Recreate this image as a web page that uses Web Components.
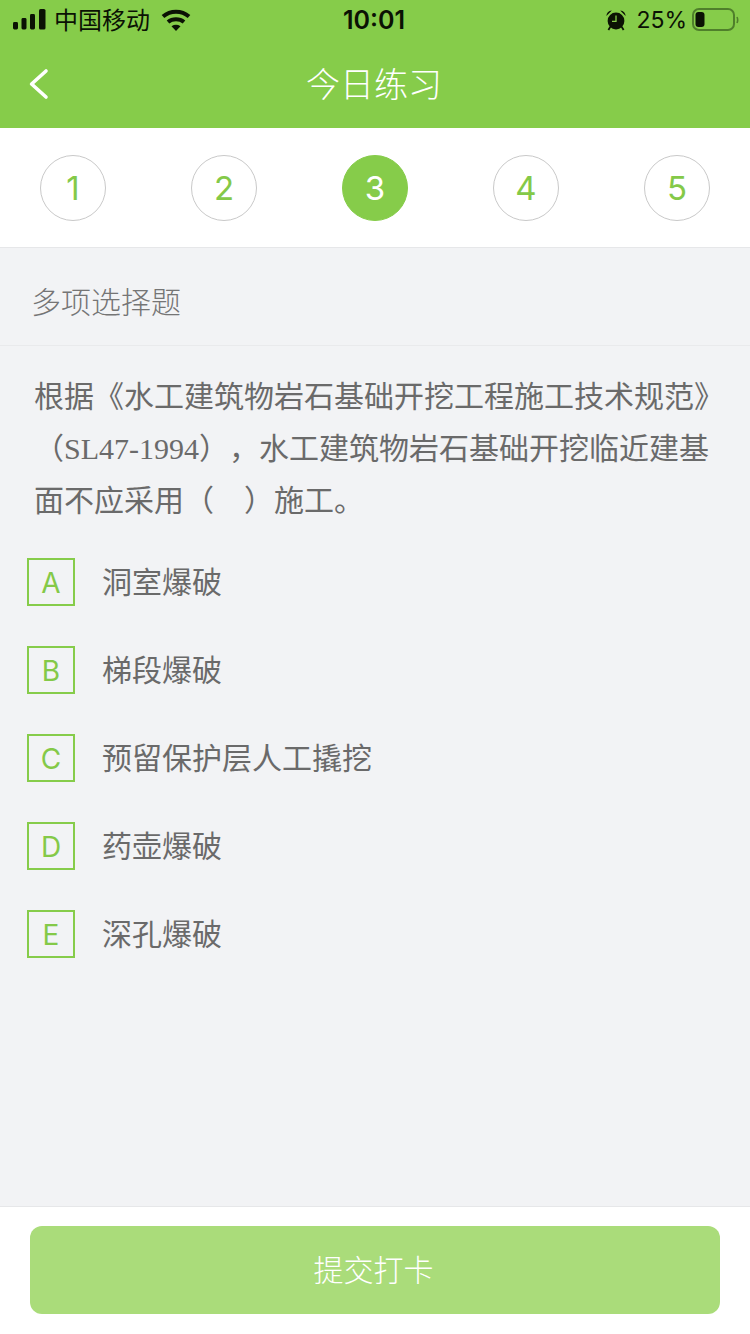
<!DOCTYPE html>
<html lang="zh">
<head>
<meta charset="utf-8">
<title>今日练习</title>
<style>
  html, body { margin: 0; padding: 0; }
  body {
    width: 750px;
    height: 1334px;
    display: flex;
    flex-direction: column;
    overflow: hidden;
    background: #f2f3f5;
    font-family: "Noto Sans CJK SC", "Liberation Sans", sans-serif;
    text-spacing-trim: space-all;
  }
  question-list { flex: 1; }
</style>
</head>
<body>
  <app-header title-text="今日练习"></app-header>
  <step-row>
    <step-dot>1</step-dot>
    <step-dot>2</step-dot>
    <step-dot active>3</step-dot>
    <step-dot>4</step-dot>
    <step-dot>5</step-dot>
  </step-row>
  <question-list>
    <span slot="kind">多项选择题</span>
    <span slot="stem">根据《水工建筑物岩石基础开挖工程施工技术规范》（SL47-1994），水工建筑物岩石基础开挖临近建基面不应采用（　）施工。</span>
    <option-row letter="A">洞室爆破</option-row>
    <option-row letter="B">梯段爆破</option-row>
    <option-row letter="C">预留保护层人工撬挖</option-row>
    <option-row letter="D">药壶爆破</option-row>
    <option-row letter="E">深孔爆破</option-row>
  </question-list>
  <submit-bar>提交打卡</submit-bar>

<script>
class AppHeader extends HTMLElement {
  constructor() {
    super();
    this.attachShadow({ mode: 'open' });
    this.shadowRoot.innerHTML = `
    <style>
      :host {
        display: block;
        height: 128px;
        background: #86cc4a;
      }
      .status {
        height: 40px;
        display: grid;
        grid-template-columns: 1fr auto 1fr;
        align-items: center;
        color: #0b1204;
        font-size: 24px;
      }
      .left, .right {
        display: flex;
        align-items: center;
      }
      .left { padding-left: 13px; }
      .left span { margin: -3px 0 0 8px; }
      .left .wifi { margin-left: 11px; }
      .right { justify-content: flex-end; padding-right: 11px; }
      .right span {
        margin: 0 5px 0 10px;
        font-family: "Inter", sans-serif;
        font-size: 23px;
      }
      .time {
        margin-left: -2px;
        font-family: "Inter", sans-serif;
        font-size: 25px;
        font-weight: 600;
      }
      .nav {
        height: 88px;
        display: flex;
        align-items: center;
        justify-content: center;
        position: relative;
        color: #fff;
        font-size: 34px;
        font-weight: 300;
      }
      .nav span { margin: -4px 2px 0 0; }
      .back {
        position: absolute;
        left: 29px;
        top: 28px;
      }
    </style>
    <div class="status">
      <div class="left">
        <svg width="33" height="22" viewBox="0 0 33 22" fill="#0b1204">
          <rect x="0" y="13" width="5" height="7.5" rx="1.4"/>
          <rect x="8.5" y="9" width="5" height="11.5" rx="1.4"/>
          <rect x="17" y="5" width="5" height="15.5" rx="1.4"/>
          <rect x="26" y="0" width="6.5" height="20.5" rx="1.6"/>
        </svg>
        <span>中国移动</span>
        <svg class="wifi" width="30" height="22" viewBox="0 0 30 22" fill="none" stroke="#0b1204" stroke-width="4">
          <path d="M2 7.5 C9.5 1 20.5 1 28 7.5"/>
          <path d="M7 13 C11.5 9.2 18.5 9.2 23 13"/>
          <path d="M10.5 17.2 L15 22 L19.5 17.2 C16.5 15.4 13.5 15.4 10.5 17.2 Z" fill="#0b1204" stroke="none"/>
        </svg>
      </div>
      <div class="time">10:01</div>
      <div class="right">
        <svg width="20" height="21" viewBox="0 0 20 21">
          <path d="M0.4 6 Q0.6 1 5.8 0.4 Z M19.6 6 Q19.4 1 14.2 0.4 Z" fill="#0b1204"/>
          <circle cx="10" cy="11" r="8.4" fill="#0b1204"/>
          <path d="M10 5.6 V11.4 H6" fill="none" stroke="#86cc4a" stroke-width="1.3"/>
          <path d="M4.4 16.6 L2.4 20 M15.6 16.6 L17.6 20" stroke="#0b1204" stroke-width="1.8"/>
        </svg>
        <span>25%</span>
        <svg width="47" height="24" viewBox="0 0 47 24">
          <rect x="1" y="1" width="41" height="21" rx="6" fill="none" stroke="#4f7f2b" stroke-width="2"/>
          <rect x="3.5" y="4" width="9" height="15" rx="3" fill="#0b1204"/>
          <path d="M45 9 Q46.4 12 45 15" fill="none" stroke="#4f7f2b" stroke-width="1.6"/>
        </svg>
      </div>
    </div>
    <div class="nav">
      <svg class="back" width="20" height="32" viewBox="0 0 20 32" fill="none" stroke="#fff" stroke-width="3.6" stroke-linecap="round" stroke-linejoin="round">
        <path d="M17 3 L2.6 16 L17 29"/>
      </svg>
      <span id="title"></span>
    </div>
    `;
  }
  connectedCallback() {
    this.shadowRoot.getElementById('title').textContent = this.getAttribute('title-text');
  }
}

class StepRow extends HTMLElement {
  constructor() {
    super();
    this.attachShadow({ mode: 'open' });
    this.shadowRoot.innerHTML = `
    <style>
      :host {
        display: flex;
        justify-content: space-between;
        align-items: flex-start;
        height: 120px;
        box-sizing: border-box;
        padding: 27px 40px 0;
        background: #fff;
        border-bottom: 1px solid #e6e7e9;
      }
    </style>
    <slot></slot>
    `;
  }
}

class StepDot extends HTMLElement {
  constructor() {
    super();
    this.attachShadow({ mode: 'open' });
    this.shadowRoot.innerHTML = `
    <style>
      :host {
        display: flex;
        align-items: center;
        justify-content: center;
        width: 66px;
        height: 66px;
        box-sizing: border-box;
        border: 1px solid #c9c9c9;
        border-radius: 50%;
        color: #84c948;
        font-family: "Inter", sans-serif;
        font-size: 33px;
      }
      :host([active]) {
        background: #86cc4a;
        border-color: #86cc4a;
        color: #fff;
      }
    </style>
    <slot></slot>
    `;
  }
}

class QuestionList extends HTMLElement {
  constructor() {
    super();
    this.attachShadow({ mode: 'open' });
    this.shadowRoot.innerHTML = `
    <style>
      :host {
        display: block;
        color: #6a6a6a;
      }
      .kind {
        height: 98px;
        box-sizing: border-box;
        display: flex;
        align-items: center;
        padding: 6px 0 0 31px;
        border-bottom: 1px solid #e9eaec;
        color: #757575;
        font-size: 30px;
        font-weight: 300;
      }
      .stem {
        padding: 25px 25px 0 34px;
        font-family: "Liberation Serif", "Noto Sans CJK SC", serif;
        font-size: 30px;
        line-height: 52px;
      }
      .options {
        display: flex;
        flex-direction: column;
        gap: 40px;
        padding: 31px 0 0 27px;
      }
    </style>
    <div class="kind"><slot name="kind"></slot></div>
    <div class="stem"><slot name="stem"></slot></div>
    <div class="options"><slot></slot></div>
    `;
  }
}

class OptionRow extends HTMLElement {
  constructor() {
    super();
    this.attachShadow({ mode: 'open' });
    this.shadowRoot.innerHTML = `
    <style>
      :host {
        display: flex;
        align-items: center;
        gap: 27px;
        height: 48px;
        color: #6a6a6a;
        font-size: 30px;
      }
      .letter {
        display: flex;
        align-items: center;
        justify-content: center;
        width: 48px;
        height: 48px;
        box-sizing: border-box;
        padding-top: 2px;
        border: 2px solid #86cc4a;
        color: #84c948;
        font-family: "Inter", sans-serif;
        font-size: 28px;
      }
      .text { margin-top: -4px; }
    </style>
    <div class="letter" id="letter"></div>
    <div class="text"><slot></slot></div>
    `;
  }
  connectedCallback() {
    this.shadowRoot.getElementById('letter').textContent = this.getAttribute('letter');
  }
}

class SubmitBar extends HTMLElement {
  constructor() {
    super();
    this.attachShadow({ mode: 'open' });
    this.shadowRoot.innerHTML = `
    <style>
      :host {
        display: block;
        height: 128px;
        box-sizing: border-box;
        padding: 19px 30px 0;
        background: #fff;
        border-top: 1px solid #e6e7e9;
      }
      button {
        display: flex;
        align-items: center;
        justify-content: center;
        width: 100%;
        height: 88px;
        padding: 0 3px 4px 0;
        border: 0;
        border-radius: 12px;
        background: #aadc7a;
        color: #fff;
        font: inherit;
        font-size: 30px;
        font-weight: 300;
      }
    </style>
    <button><slot></slot></button>
    `;
  }
}

customElements.define('app-header', AppHeader);
customElements.define('step-row', StepRow);
customElements.define('step-dot', StepDot);
customElements.define('question-list', QuestionList);
customElements.define('option-row', OptionRow);
customElements.define('submit-bar', SubmitBar);
</script>
</body>
</html>
